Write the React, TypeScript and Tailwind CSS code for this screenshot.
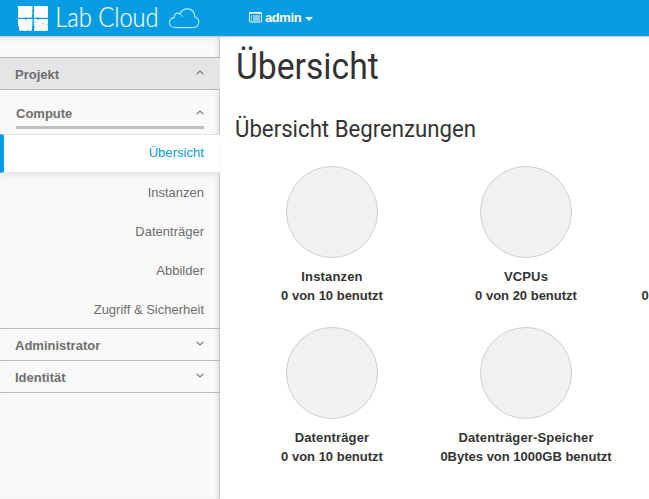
import React from "react";

const font = "font-['Liberation_Sans',Arial,sans-serif]";

function Chevron({ down = false }: { down?: boolean }) {
  return (
    <svg width="8" height="5" viewBox="0 0 8 5" fill="none" stroke="#747474" strokeWidth="1.15">
      <path d={down ? "M.5.6 4 4 7.5.6" : "M.5 4.4 4 1 7.5 4.4"} />
    </svg>
  );
}

function Logo() {
  return (
    <svg width="190" height="36" viewBox="0 0 190 36" className="ml-[17px] shrink-0">
      <g fill="#fff">
        <path d="M1 6h14.4l.2 3.5-.6 2 .4 2-.8 4.2H10l-.6-.7-1.2.7H1z" />
        <path d="M16.8 6H31v11.7h-9l-1.2-.7-.6.7h-3.6l.6-3-.4-2 .6-2z" />
        <path d="M1 19h6.8l1 1.6.8-1.6h5.8v6l-.9 6h-2.9l-.6-2.2-.6 2.2H5.7l-.6-1.8-.6 1.8H2.3L1.8 27 1 25z" />
        <path d="M16.8 19h3.4l.8 1.4.9-1.4H31v4.4l-.8.8.8.9V31l-1.6-.6-1.2.6H17.3l-.4-2.5 1-1-.9-2z" />
      </g>
      <path d="M16.4 22.5h3M24.5 23.7h3M16.8 10.8v4" stroke="#6fc8f0" strokeWidth=".7" />
      <text x="38.2" y="27" fill="#fff" stroke="#fff" strokeWidth=".15" fontSize="26.5" fontWeight="300" textLength="103.5" lengthAdjust="spacingAndGlyphs" className="font-[Lato,sans-serif]">Lab Cloud</text>
      <path d="M158 27.5c-3.2 0-5.5-2-5.5-4.8 0-2.7 1.9-4.8 4.6-5.1-.2-2.6 1.5-4.4 3.7-4.4.8 0 1.6.2 2.3.7 1.1-3.1 3.8-5.1 7.1-5.1 4.6 0 7.7 3.3 7.5 7.9 2.5.8 4.1 2.8 4.1 5.3 0 3.2-2.4 5.5-5.7 5.5z" fill="none" stroke="#b4ecff" strokeWidth="1.2" />
      <path d="M163.1 13.9c1.3.7 2 1.6 2.3 2.9" fill="none" stroke="#b4ecff" strokeWidth="1" />
    </svg>
  );
}

function PanelGroup({ label, open = false }: { label: string; open?: boolean }) {
  return (
    <div className={`flex h-8 items-center justify-between border-b border-[#b8b8b8] pl-[15px] pr-4 text-[13px] font-bold text-[#6e6e6e] ${open ? "bg-[#e4e5e6]" : ""}`}>
      <span className="pt-[2px]">{label}</span>
      <span className="pb-[2px]"><Chevron down={!open} /></span>
    </div>
  );
}

function Sidebar() {
  const links = ["Instanzen", "Datenträger", "Abbilder", "Zugriff & Sicherheit"];
  return (
    <aside className="h-[462px] w-[220px] shrink-0 bg-[#f9f9f9] shadow-[inset_-1px_0_0_#c9c9c9,inset_-4px_0_4px_-2px_#d9d9d9,inset_0_4px_4px_-2px_#e9e9e9]">
      <div className="h-[21px] border-b border-[#b8b8b8]" />
      <PanelGroup label="Projekt" open />
      <div className="h-[44px] px-4 pt-[14px]">
        <div className="flex h-[25px] items-start justify-between border-b-[3px] border-[#bfbfbf] text-[13px] leading-5 font-bold text-[#6e6e6e]">
          <span>Compute</span>
          <span className="mt-[6px] flex"><Chevron /></span>
        </div>
      </div>
      <a className="flex h-[39px] items-center justify-end border-y border-l-4 border-y-[#e2e2e2] border-l-[#059ce3] bg-white pr-4 pb-px text-[13px] tracking-[0.05px] text-[#059ce3] shadow-[0_4px_5px_-2px_#e2e2e2]">Übersicht</a>
      <nav className="h-[156px] border-b border-[#b8b8b8]">
        {links.map((l) => (
          <a key={l} className="flex h-[39px] items-center justify-end pr-4 text-[13px] text-[#6e6e6e]">{l}</a>
        ))}
      </nav>
      <PanelGroup label="Administrator" />
      <PanelGroup label="Identität" />
    </aside>
  );
}

function Quota({ title, usage }: { title: string; usage: string }) {
  return (
    <div className="flex h-[161px] w-[194px] shrink-0 flex-col items-center text-[13px] leading-[19px] font-bold whitespace-nowrap text-[#333]">
      <div className="mb-[9px] h-[92px] w-[92px] shrink-0 rounded-full border border-[#cfcfcf] bg-[#f1f1f1]" />
      <span className="h-[19px] tracking-[0.15px]">{title}</span>
      <span>{usage}</span>
    </div>
  );
}

export default function App() {
  return (
    <div className={`h-[499px] w-[649px] overflow-hidden bg-white ${font}`}>
      <header className="flex h-[37px] border-b border-[#c9d0d4] bg-[#059ce3]">
        <Logo />
        <div className="ml-[42px] flex h-[35px] items-center text-[13px] font-bold text-white">
          <svg width="13" height="11" viewBox="0 0 13 11" className="mr-[3px]">
            <rect x=".5" y=".5" width="12" height="9.5" rx=".8" fill="none" stroke="#fff" />
            <path d="M0 1.2h13M2 4h1M4 4h7M2 6h1M4 6h7M2 8h1M4 8h7" stroke="#fff" strokeWidth="1" />
          </svg>
          <span className="w-9 tracking-[-0.4px]">admin</span>
          <svg width="8" height="4" viewBox="0 0 8 4" className="mt-[3px] ml-1"><path d="M0 0h8L4 4z" fill="#fff" /></svg>
        </div>
      </header>
      <div className="flex">
        <Sidebar />
        <main className="h-[462px] w-[429px] overflow-hidden pl-[15px] text-[#333]">
          <h1 className="mt-[7px] ml-px h-[46px] origin-left scale-x-[0.935] font-[Roboto,sans-serif] text-[36px] leading-[46px] whitespace-nowrap">Übersicht</h1>
          <h2 className="mt-[24px] h-[30px] origin-left scale-x-[0.925] font-[Roboto,sans-serif] text-[24px] leading-[30px] whitespace-nowrap">Übersicht Begrenzungen</h2>
          <div className="mt-[22px] flex">
            <Quota title="Instanzen" usage="0 von 10 benutzt" />
            <Quota title="VCPUs" usage="0 von 20 benutzt" />
            <Quota title="" usage="0Bytes von 50GB benutzt" />
          </div>
          <div className="flex">
            <Quota title="Datenträger" usage="0 von 10 benutzt" />
            <Quota title="Datenträger-Speicher" usage="0Bytes von 1000GB benutzt" />
          </div>
        </main>
      </div>
    </div>
  );
}
